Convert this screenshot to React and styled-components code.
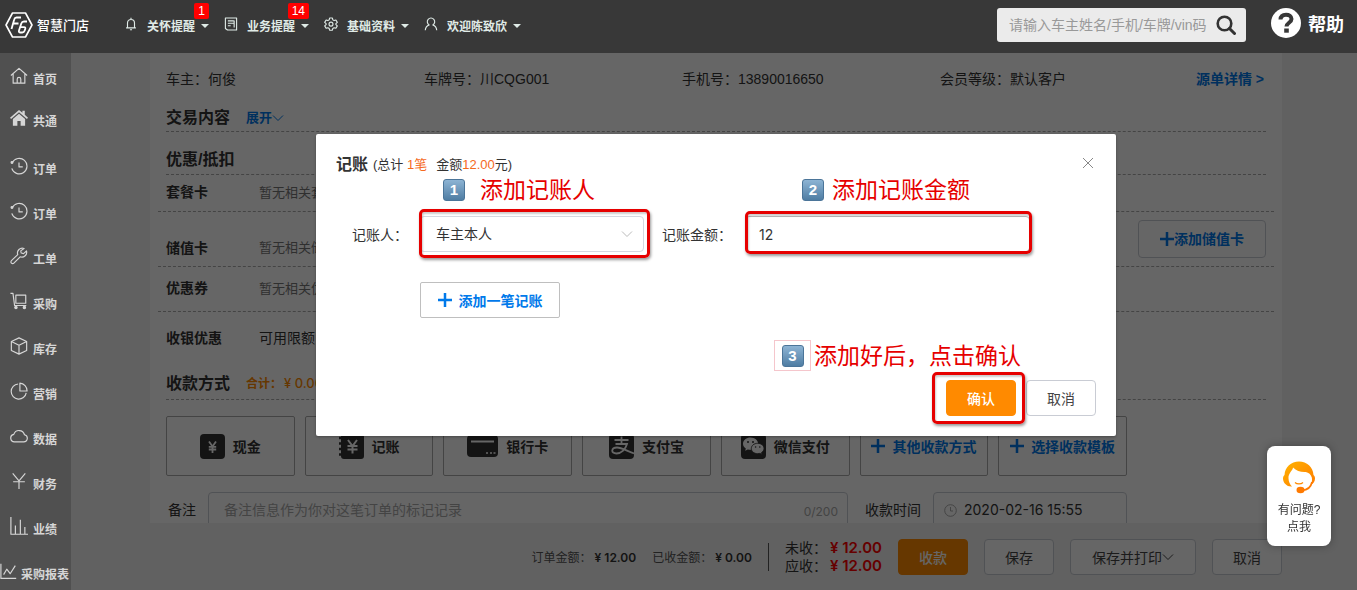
import React, { useState } from 'react';
import styled, { createGlobalStyle, css } from 'styled-components';

const colors = {
    header: '#383838',
    sidebar: '#505050',
    page: '#f2f2f2',
    blue: '#0079ea',
    orange: '#ff8a00',
    text: '#333',
    mutedText: '#777',
    border: '#c9ccd4',
    danger: '#e60000'
};

const baseFont = '"Liberation Sans", "Noto Sans CJK SC", sans-serif';
const numberFont = 'Inter, "Noto Sans CJK SC", sans-serif';

const menu = [
    { label: '首页', icon: 'home' },
    { label: '共通', icon: 'homeFill' },
    { label: '订单', icon: 'history', spaced: true },
    { label: '订单', icon: 'history' },
    { label: '工单', icon: 'wrench' },
    { label: '采购', icon: 'cart' },
    { label: '库存', icon: 'box' },
    { label: '营销', icon: 'pie' },
    { label: '数据', icon: 'cloud' },
    { label: '财务', icon: 'yen' },
    { label: '业绩', icon: 'bars' },
    { label: '采购报表', icon: 'line', wide: true }
];

const nav = [
    { label: '关怀提醒', icon: 'bell', badge: 1 },
    { label: '业务提醒', icon: 'doc', badge: 14 },
    { label: '基础资料', icon: 'gear' },
    { label: '欢迎陈致欣', icon: 'user' }
];

const glyphs = {
    home: <path d="M1 9.5 10 1.5l9 8M3.5 7.8V18h13V7.8M8 18v-4.5a2 2 0 0 1 4 0V18" />,
    homeFill: (
        <g fill="currentColor" stroke="none">
            <path d="M10 1 0 9.6l1.2 1.4L10 3.6l8.8 7.4L20 9.6l-3.6-3.1V2h-2.6v2.3z" />
            <path d="M10 5.4 3.2 11v7.6h5v-5.2h3.6v5.2h5V11z" />
        </g>
    ),
    history: (
        <g>
            <path d="M2.6 6.2A8.6 8.6 0 1 1 2 12.6M10 6v5h4.2" />
            <circle cx="2.2" cy="6.2" r="1" fill="currentColor" />
        </g>
    ),
    wrench: <path d="M15.6 1.6a5.4 5.4 0 0 0-7 6.8L1.6 15.2a1.9 1.9 0 0 0 0 2.7 1.9 1.9 0 0 0 2.7 0l7-7a5.4 5.4 0 0 0 7-6.6l-3.2 3-2.6-.6-.6-2.4z" />,
    cart: (
        <g>
            <path d="M.5 1.5h2.8l1.8 13.5h13M6.5 3.5h11v9h-11z" />
            <circle cx="6.6" cy="17.2" r="1.3" fill="currentColor" />
            <circle cx="16" cy="17.2" r="1.3" fill="currentColor" />
        </g>
    ),
    box: <path d="m10 1 8.5 4v10L10 19l-8.5-4V5zM1.5 5l8.5 4.2L18.5 5M10 9.2V19" />,
    pie: <path d="M9 2.2A8.4 8.4 0 1 0 18 12M11 1.3V10h8a8.6 8.6 0 0 0-8-8.7z" />,
    cloud: <path d="M5.4 16.5h9.8a4 4 0 0 0 .9-7.9 6.2 6.2 0 0 0-11.9-.4 4.2 4.2 0 0 0 1.2 8.3z" />,
    yen: <path d="m3 1.5 7 8.3 7-8.3M10 9.8V19M3.5 10.8h13" />,
    bars: <path d="M1 0v19.2h19M6 19V9.5M11.5 19V3M16.5 19v-8" />,
    line: <path d="M1 2v16.2h17M4 14l3.5-6 3.8 5L17 4" />,
    bell: <path d="M3 15.5h14M5 15.2V8.5a5 5 0 0 1 10 0v6.7M8.5 18.3h3M10 1.2v2" />,
    doc: <path d="M2 1.5h16v17H5l-3-2zM5.5 5.5H14M5.5 9H14M5.5 12.5h4M14.5 5v10" />,
    gear: (
        <g>
            <path d="m8 1.5-.6 2.6-1.8 1L3 4.3l-2 3.4 2 1.8v1.4l-2 1.8 2 3.4 2.6-.8 1.8 1 .6 2.6h4l.6-2.6 1.8-1 2.6.8 2-3.4-2-1.8V9.5l2-1.8-2-3.4-2.6.8-1.8-1-.6-2.6z" />
            <circle cx="10" cy="10.2" r="2.8" />
        </g>
    ),
    user: <path d="M1.8 19c.3-4.2 2.5-6.7 5.6-7.7a5.3 5.3 0 1 1 5.2 0c3.1 1 5.3 3.500 5.6 7.7" />
};

const Glyph = ({ name, size = 18, weight = 1.4 }) => (
    <svg
        width={size}
        height={size}
        viewBox="0 0 20 20"
        fill="none"
        stroke="currentColor"
        strokeWidth={weight}
        strokeLinejoin="round"
        aria-hidden="true"
    >
        {glyphs[name]}
    </svg>
);

const Plus = () => (
    <svg width="14" height="14" viewBox="0 0 14 14" stroke="currentColor" strokeWidth="2.5" aria-hidden="true">
        <path d="M7 0v14M0 7h14" />
    </svg>
);

const Chevron = () => (
    <svg width="12" height="12" viewBox="0 0 12 12" fill="none" stroke="currentColor" aria-hidden="true">
        <path d="m1 3.5 5 5 5-5" />
    </svg>
);

const Logo = () => (
    <svg width="28" height="26" viewBox="0 0 28 26" fill="none" stroke="#fff" aria-hidden="true">
        <path d="M7.5 1h13L27 13l-6.5 12h-13L1 13z" strokeWidth="1.6" strokeLinejoin="round" />
        <path d="M16 5.5h-4.5c-1.5 0-2 .8-2.3 2L6.5 17M8.5 11.5h5" strokeWidth="1.8" />
        <path d="M22 9.5h-3c-1.5 0-2.3.7-2.7 2l-2.3 7c-.4 1.4.1 2 1.3 2h2c1.2 0 1.9-.5 2.3-1.7l.6-1.9c.4-1.2 0-1.8-1.2-1.8h-3.5" strokeWidth="1.8" />
    </svg>
);

const CashIcon = () => (
    <svg width="25" height="25" viewBox="0 0 25 25" aria-hidden="true">
        <rect width="25" height="25" rx="4" fill="#333" />
        <path d="m9 7.5 3.5 5 3.5-5M12.5 12.5V19M8.8 12.8h7.4M8.8 15.5h7.4" fill="none" stroke="#fff" strokeWidth="1.8" />
    </svg>
);

const LedgerIcon = () => (
    <svg width="25" height="25" viewBox="0 0 25 25" aria-hidden="true">
        <rect x="2" width="23" height="25" rx="3" fill="#333" />
        <path d="M0 4h4M0 9.5h4M0 15h4M0 20.5h4" stroke="#333" strokeWidth="2.5" />
        <path d="m9 6 4.5 6L18 6M13.5 12v7.5M8.5 12h10M8.5 15.5h10" fill="none" stroke="#fff" strokeWidth="2" />
    </svg>
);

const BankIcon = () => (
    <svg width="31" height="22" viewBox="0 0 31 22" aria-hidden="true">
        <rect width="31" height="22" rx="4" fill="#333" />
        <path d="M4 6.5h23" stroke="#fff" strokeWidth="2" />
        <path d="M19 18h2M23 18h2M26.5 18h2" stroke="#fff" strokeWidth="1.5" />
    </svg>
);

const AlipayIcon = () => (
    <svg width="25" height="25" viewBox="0 0 25 25" aria-hidden="true">
        <rect width="25" height="25" rx="4" fill="#333" />
        <path
            d="M5.5 6h14M12.5 2.5V10M6.5 10H18c-1.5 5.5-6 9.5-10.5 9.5-6 0-5.5-6 .5-6 5 0 9.5 3.5 17 6"
            fill="none"
            stroke="#fff"
            strokeWidth="1.8"
        />
    </svg>
);

const WechatIcon = () => (
    <svg width="25" height="25" viewBox="0 0 25 25" aria-hidden="true">
        <rect width="25" height="25" rx="4" fill="#333" />
        <path d="M9.5 3.5C5.4 3.5 2 6.2 2 9.7c0 2 1.1 3.7 2.8 4.8l-.6 2.2 2.6-1.3c.9.3 1.8.4 2.7.4 4.2 0 7.6-2.7 7.6-6.1s-3.4-6.2-7.6-6.2z" fill="#fff" />
        <path d="M16.7 9.3c-3.6 0-6.4 2.3-6.4 5.2s2.8 5.2 6.4 5.2c.8 0 1.5-.1 2.2-.3l2.2 1.1-.6-1.9c1.5-1 2.5-2.4 2.5-4.1 0-2.9-2.8-5.2-6.3-5.2z" fill="#fff" stroke="#333" strokeWidth=".9" />
        <g fill="#333">
            <circle cx="7" cy="8" r="1" />
            <circle cx="12" cy="8" r="1" />
            <circle cx="14.6" cy="13" r=".8" />
            <circle cx="18.8" cy="13" r=".8" />
        </g>
    </svg>
);

const AgentIcon = () => (
    <svg width="34" height="34" viewBox="0 0 34 34" aria-hidden="true">
        <defs>
            <linearGradient id="agent" x1="0" y1="0" x2="1" y2="1">
                <stop offset="0" stopColor="#ffb400" />
                <stop offset="1" stopColor="#ff7a00" />
            </linearGradient>
        </defs>
        <path
            d="M10 26.5C5 27 1 23 1 18.5c0-1.5.5-2.5 1.5-3.5C3 7 9 1.5 17 1.5S31 7 31.5 15c1 1 1.5 2 1.5 3.5 0 3-1.5 5-4 6.3 1-2.3 1.3-5 .8-7.3-1-3-3-5-6-5.5-5 .3-9.3-1-12.8-4.5C11 10.5 6 13 6.5 18.5c.2 3.5 1.5 6 3.5 8z"
            fill="url(#agent)"
        />
        <path d="M13 22.5c2 1.8 6 1.8 8 0" fill="none" stroke="#ff8a00" strokeWidth="1.3" />
        <path d="M30 22c-1 5-4.5 8-10 8.5" fill="none" stroke="#ff7a00" strokeWidth="1.7" />
        <ellipse cx="18.5" cy="30" rx="4" ry="3.3" fill="#ff7a00" />
    </svg>
);

const payMethods = [
    { label: '现金', icon: <CashIcon /> },
    { label: '记账', icon: <LedgerIcon /> },
    { label: '银行卡', icon: <BankIcon /> },
    { label: '支付宝', icon: <AlipayIcon /> },
    { label: '微信支付', icon: <WechatIcon /> },
    { label: '其他收款方式', icon: <Plus />, link: true },
    { label: '选择收款模板', icon: <Plus />, link: true }
];

const Header = () => (
    <HeaderBar>
        <Brand href="#">
            <Logo />
            <span>智慧门店</span>
        </Brand>
        <Nav>
            {nav.map(({ label, icon, badge }) => (
                <NavButton key={label} type="button">
                    <Glyph name={icon} size={14} weight={1.6} />
                    <span>{label}</span>
                    <Caret />
                    {badge && <Badge>{badge}</Badge>}
                </NavButton>
            ))}
        </Nav>
        <Search role="search">
            <input aria-label="搜索" placeholder="请输入车主姓名/手机/车牌/vin码" />
            <button type="button" aria-label="搜索">
                <svg width="20" height="20" viewBox="0 0 20 20" fill="none" stroke="#333">
                    <circle cx="8.5" cy="8.5" r="6.8" strokeWidth="2.6" />
                    <path d="m13.5 13.5 5 5" strokeWidth="3" strokeLinecap="round" />
                </svg>
            </button>
        </Search>
        <Help href="#">
            <svg width="30" height="30" viewBox="0 0 30 30" aria-hidden="true">
                <circle cx="15" cy="15" r="15" fill="#fff" />
                <path d="M9.5 11.5c.2-3.5 2.4-4.8 5.5-4.8s5.5 1.5 5.5 4.3c0 3.8-5 3.7-5 7.5" fill="none" stroke={colors.header} strokeWidth="4" />
                <rect x="13.2" y="20.5" width="4.6" height="4.2" fill={colors.header} />
            </svg>
            <span>帮助</span>
        </Help>
    </HeaderBar>
);

const Sidebar = () => (
    <Side>
        {menu.map(({ label, icon, spaced, wide }, i) => (
            <SideLink key={i} href="#" $short={i < 2} $spaced={spaced} $wide={wide}>
                <Glyph name={icon} weight={1.3} />
                <span>{label}</span>
            </SideLink>
        ))}
    </Side>
);

const Order = () => {
    const [remark, setRemark] = useState('');

    return (
        <Panel>
            <InfoRow>
                <p>车主：何俊</p>
                <p>车牌号：川CQG001</p>
                <p>手机号：13890016650</p>
                <p>会员等级：默认客户</p>
                <a href="#">源单详情 &gt;</a>
            </InfoRow>
            <Section $height={27} $line={26}>
                <h2>交易内容</h2>
                <Expand type="button">展开<Chevron /></Expand>
            </Section>
            <Section $height={43} $line={28}>
                <h2>优惠/抵扣</h2>
            </Section>
            <Discount $height={37}>
                <h3>套餐卡</h3>
                <p>暂无相关套餐卡</p>
            </Discount>
            <Discount $height={55}>
                <h3>储值卡</h3>
                <p>暂无相关储值卡</p>
                <AddCard type="button"><Plus />添加储值卡</AddCard>
            </Discount>
            <Discount $height={45}>
                <h3>优惠券</h3>
                <p>暂无相关优惠券</p>
            </Discount>
            <Discount $height={52} $plain>
                <h3>收银优惠</h3>
                <p>可用限额</p>
            </Discount>
            <Section $height={36} $line={30}>
                <h2>收款方式</h2>
                <Total>合计：<b>¥ 0.00</b></Total>
            </Section>
            <PayGrid>
                {payMethods.map(({ label, icon, link }) => (
                    <PayButton key={label} type="button" $link={link}>
                        {icon}
                        <span>{label}</span>
                    </PayButton>
                ))}
            </PayGrid>
            <RemarkRow>
                <label htmlFor="remark">备注</label>
                <RemarkBox>
                    <textarea
                        id="remark"
                        maxLength={200}
                        placeholder="备注信息作为你对这笔订单的标记记录"
                        value={remark}
                        onChange={e => setRemark(e.target.value)}
                    />
                    <span>{remark.length}/200</span>
                </RemarkBox>
                <label htmlFor="time">收款时间</label>
                <TimeBox>
                    <svg width="13" height="13" viewBox="0 0 13 13" fill="none" stroke="#aaa" aria-hidden="true">
                        <circle cx="6.5" cy="6.5" r="5.8" />
                        <path d="M6.5 3v4H9" />
                    </svg>
                    <input id="time" defaultValue="2020-02-16 15:55" />
                </TimeBox>
            </RemarkRow>
        </Panel>
    );
};

const Footer = () => (
    <FooterBar>
        <Sum>订单金额：<b>¥ 12.00</b></Sum>
        <Sum>已收金额：<b>¥ 0.00</b></Sum>
        <Due>
            <p>未收：<b>¥ 12.00</b></p>
            <p>应收：<b>¥ 12.00</b></p>
        </Due>
        <FooterActions>
            <Button type="button" $primary>收款</Button>
            <Button type="button">保存</Button>
            <Button type="button" $wide>保存并打印<Chevron /></Button>
            <Button type="button">取消</Button>
        </FooterActions>
    </FooterBar>
);

const CreditDialog = () => {
    const [amount, setAmount] = useState('12');

    return (
        <Dialog role="dialog" aria-labelledby="credit-title">
            <DialogHead>
                <h1 id="credit-title">记账</h1>
                <p>(总计 <em>1笔</em></p>
                <p>金额<em>12.00</em>元)</p>
                <button type="button" aria-label="关闭">
                    <svg width="12" height="12" viewBox="0 0 12 12" stroke="#888">
                        <path d="m1 1 10 10M11 1 1 11" />
                    </svg>
                </button>
            </DialogHead>
            <FormRow>
                <label htmlFor="payer">记账人：</label>
                <SelectBox>
                    <select id="payer" defaultValue="owner">
                        <option value="owner">车主本人</option>
                    </select>
                    <Chevron />
                    <Outline $inset="-7px -6px -6px -1px" />
                    <Note $left={23} $top={-40} $gap={15}><Key>1</Key>添加记账人</Note>
                </SelectBox>
                <label htmlFor="amount">记账金额：</label>
                <AmountBox>
                    <input id="amount" value={amount} onChange={e => setAmount(e.target.value)} />
                    <Outline $inset="-5px -2px -2px 0" />
                    <Note $left={57} $top={-40} $gap={8}><Key>2</Key>添加记账金额</Note>
                </AmountBox>
            </FormRow>
            <AddEntry type="button"><Plus />添加一笔记账</AddEntry>
            <DialogActions>
                <Confirm>
                    <Button type="button" $primary>确认</Button>
                    <Outline $inset="-8px -9px -8px -14px" />
                    <Note $left={-172} $top={-40} $gap={3}>
                        <KeyFrame><Key>3</Key></KeyFrame>添加好后，点击确认
                    </Note>
                </Confirm>
                <Button type="button">取消</Button>
            </DialogActions>
        </Dialog>
    );
};

const App = () => (
    <>
        <GlobalStyle />
        <Page>
            <Header />
            <Body>
                <Sidebar />
                <Main>
                    <Order />
                    <Footer />
                    <Mask>
                        <CreditDialog />
                    </Mask>
                </Main>
            </Body>
            <Support href="#">
                <AgentIcon />
                <span>有问题?<br />点我</span>
            </Support>
        </Page>
    </>
);

export default App;

const GlobalStyle = createGlobalStyle`
    * {
        box-sizing: border-box;
        margin: 0;
    }

    body {
        font-family: ${baseFont};
        font-size: 14px;
        color: ${colors.text};
        overflow: hidden;
    }

    button, input, select, textarea {
        font: inherit;
        color: inherit;
        padding: 0;
        border: 0;
        outline: 0;
        background: none;
    }

    button {
        cursor: pointer;
    }

    a {
        color: inherit;
        text-decoration: none;
    }

    svg {
        flex: none;
    }
`;

const Page = styled.div`
    height: 100vh;
    display: flex;
    flex-direction: column;
`;

const HeaderBar = styled.header`
    flex: none;
    height: 53px;
    padding: 0 13px 0 5px;
    display: flex;
    align-items: center;
    background-color: ${colors.header};
    color: #fff;
`;

const Brand = styled.a`
    width: 119px;
    padding-bottom: 4px;
    display: flex;
    align-items: center;
    gap: 4px;
    font-size: 13px;
    font-weight: 500;
`;

const Nav = styled.nav`
    flex: 1;
    display: flex;
    gap: 15px;
`;

const NavButton = styled.button`
    position: relative;
    height: 53px;
    padding-bottom: 2px;
    display: flex;
    align-items: center;
    font-size: 12px;
    font-weight: 700;
    color: #e0ebe7;

    & > span {
        margin: 0 6px 0 9px;
    }

    & > svg {
        margin-bottom: 3px;
    }
`;

const Caret = styled.i`
    border: 4px solid transparent;
    border-top-color: currentColor;
    border-bottom: 0;
`;

const Badge = styled.sup`
    position: absolute;
    top: 3px;
    right: 0;
    padding: 0 4px;
    border-radius: 2px;
    background-color: #f00;
    color: #fff;
    font-size: 12px;
    font-weight: 400;
    line-height: 16px;
`;

const Search = styled.div`
    width: 249px;
    height: 34px;
    margin-bottom: 3px;
    padding: 0 10px 0 12px;
    display: flex;
    align-items: center;
    gap: 6px;
    border-radius: 3px;
    background-color: #ebebeb;

    input {
        flex: 1;
        min-width: 0;
        color: #333;
    }

    input::placeholder {
        color: #999;
    }

    button {
        display: flex;
    }
`;

const Help = styled.a`
    margin: 0 0 7px 25px;
    display: flex;
    align-items: center;
    gap: 7px;
    font-size: 18px;
    font-weight: 700;
`;

const Body = styled.div`
    flex: 1;
    min-height: 0;
    display: flex;
`;

const Side = styled.aside`
    flex: none;
    width: 71px;
    padding-top: 4px;
    overflow: hidden;
    background-color: ${colors.sidebar};
    color: #d6d6d6;
`;

const SideLink = styled.a`
    height: ${p => p.$short ? 42 : 45}px;
    margin-top: ${p => p.$spaced ? 5 : 0}px;
    padding-left: ${p => p.$wide ? 0 : 10}px;
    display: flex;
    align-items: center;
    gap: ${p => p.$wide ? 3 : 5}px;
    font-size: 12px;
    font-weight: 700;
    white-space: nowrap;

    & > svg {
        margin-bottom: 5px;
    }
`;

const Main = styled.main`
    position: relative;
    flex: 1;
    min-width: 0;
    display: flex;
    flex-direction: column;
    padding: 0 75px 0 79px;
    background-color: ${colors.page};
`;

const Mask = styled.div`
    position: absolute;
    inset: 0;
    padding: 81px 75px 0 79px;
    background-color: rgba(0, 0, 0, .6);
`;

const Panel = styled.section`
    flex: 1;
    min-height: 0;
    overflow: hidden;
    padding: 0 16px;
    background-color: #fff;
`;

const InfoRow = styled.div`
    height: 52px;
    padding: 0 2px 2px 0;
    display: flex;
    align-items: center;
    white-space: nowrap;

    & > p {
        flex: none;
        width: 258px;
    }

    & > p:last-of-type {
        flex: 1;
    }

    & > a {
        color: ${colors.blue};
        font-weight: 700;
    }
`;

const Section = styled.div`
    height: ${p => p.$height}px;
    display: flex;
    align-items: flex-end;
    gap: 16px;
    border-bottom: 1px dashed #aaa;
    line-height: ${p => p.$line}px;

    h2 {
        font-size: 16px;
        font-weight: 700;
    }
`;

const Expand = styled.button`
    display: flex;
    align-items: center;
    color: ${colors.blue};
    font-size: 13px;
    font-weight: 700;
    line-height: inherit;
`;

const Total = styled.span`
    color: ${colors.orange};
    font-size: 12px;
    font-weight: 700;

    b {
        margin-left: 2px;
        font-family: ${numberFont};
        font-size: 13px;
        font-weight: 500;
    }
`;

const Discount = styled.div`
    height: ${p => p.$height}px;
    margin: 0 -8px;
    padding: 0 8px;
    display: flex;
    align-items: flex-end;
    border-bottom: ${p => p.$plain ? 0 : '1px dashed #aaa'};
    line-height: ${p => p.$height === 55 ? 36 : p.$height}px;

    h3 {
        width: 93px;
        font-size: 14px;
        font-weight: 700;
    }

    p {
        flex: 1;
        font-size: ${p => p.$plain ? 14 : 13}px;
        color: ${p => p.$plain ? colors.text : colors.mutedText};
    }
`;

const AddCard = styled.button`
    align-self: center;
    width: 128px;
    height: 38px;
    display: flex;
    align-items: center;
    justify-content: center;
    border: 1px solid ${colors.border};
    border-radius: 4px;
    color: ${colors.blue};
    font-weight: 700;
`;

const PayGrid = styled.div`
    margin: 16px 139px 16px 0;
    display: grid;
    grid-template-columns: repeat(7, 1fr);
    gap: 10px;
`;

const PayButton = styled.button`
    height: 60px;
    display: flex;
    align-items: center;
    justify-content: center;
    gap: ${p => p.$link ? 7 : 8}px;
    border: 1px solid #aaa;
    border-radius: 2px;
    font-weight: 700;
    white-space: nowrap;
    color: ${p => p.$link ? colors.blue : colors.text};
`;

const fieldBox = css`
    height: 80px;
    border: 1px solid ${colors.border};
    border-radius: 4px;
    display: flex;
    align-items: flex-start;
    line-height: 34px;
`;

const RemarkRow = styled.div`
    margin-right: 139px;
    padding-left: 2px;
    display: flex;
    line-height: 36px;
`;

const RemarkBox = styled.div`
    ${fieldBox}
    flex: 1;
    margin: 0 17px 0 12px;
    padding: 0 9px 0 15px;

    textarea {
        flex: 1;
        height: 70px;
        resize: none;
        line-height: 34px;
    }

    textarea::placeholder {
        color: #aaa;
    }

    span {
        font-family: ${numberFont};
        font-size: 12px;
        line-height: 38px;
        color: #aaa;
    }
`;

const TimeBox = styled.div`
    ${fieldBox}
    width: 194px;
    margin-left: 12px;
    padding: 0 11px 0 10px;
    gap: 7px;

    svg {
        margin-top: 11px;
    }

    input {
        flex: 1;
        min-width: 0;
        font-family: ${numberFont};
        font-size: 14px;
    }
`;

const FooterBar = styled.footer`
    flex: none;
    height: 67px;
    display: flex;
    align-items: center;
    justify-content: flex-end;
`;

const Sum = styled.p`
    margin-right: 16px;
    font-size: 12px;
    color: #555;

    b {
        margin-left: 3px;
        font-family: ${numberFont};
        font-weight: 600;
        color: ${colors.text};
    }
`;

const Due = styled.div`
    margin-right: 16px;
    padding-left: 17px;
    position: relative;
    line-height: 18px;

    &::before {
        content: '';
        position: absolute;
        left: 0;
        top: 4px;
        bottom: 4px;
        border-left: 1px solid #555;
    }

    b {
        margin-left: 3px;
        font-size: 15px;
        font-family: ${numberFont};
        font-weight: 600;
        color: #f00;
    }
`;

const FooterActions = styled.div`
    display: flex;
    gap: 16px;
`;

const Button = styled.button`
    width: ${p => p.$wide ? 126 : 70}px;
    height: 36px;
    display: flex;
    align-items: center;
    justify-content: center;
    border: 1px solid ${p => p.$primary ? colors.orange : colors.border};
    border-radius: 4px;
    background-color: ${p => p.$primary ? colors.orange : '#fff'};
    color: ${p => p.$primary ? '#fff' : '#444'};
    font-weight: ${p => p.$primary ? 500 : 400};
`;

const Dialog = styled.section`
    position: relative;
    max-width: 800px;
    margin: 0 auto;
    padding: 20px;
    border-radius: 2px;
    background-color: #fff;
    box-shadow: 0 1px 3px rgba(0, 0, 0, .3);
`;

const DialogHead = styled.header`
    height: 22px;
    display: flex;
    align-items: center;
    line-height: 22px;

    h1 {
        margin-right: 5px;
        font-size: 16px;
        font-weight: 700;
    }

    p {
        margin-right: 9px;
        font-size: 13px;
    }

    em {
        font-style: normal;
        color: #f56a1d;
    }

    button {
        margin: 0 2px 4px auto;
        display: flex;
    }
`;

const FormRow = styled.div`
    height: 36px;
    margin-top: 40px;
    padding-left: 16px;
    display: flex;
    align-items: center;

    & > label {
        width: 68px;
        white-space: nowrap;
    }
`;

const SelectBox = styled.div`
    position: relative;
    width: 224px;
    margin-right: 18px;

    select {
        display: block;
        width: 100%;
        height: 36px;
        padding: 0 30px 0 15px;
        border: 1px solid #d5d8e0;
        border-radius: 4px;
        appearance: none;
    }

    & > svg {
        position: absolute;
        right: 11px;
        top: 12px;
        color: #bbb;
        pointer-events: none;
    }
`;

const AmountBox = styled.div`
    position: relative;
    width: 285px;
    margin-left: 15px;

    input {
        display: block;
        width: 100%;
        height: 36px;
        padding: 0 13px;
        border: 1px solid #bbb;
        border-radius: 4px;
        font-family: ${numberFont};
        font-size: 14px;
    }
`;

const Outline = styled.div`
    position: absolute;
    inset: ${p => p.$inset};
    border: 3px solid ${colors.danger};
    border-radius: 5px;
    box-shadow: 1px 2px 3px rgba(0, 0, 0, .4), inset 1px 2px 2px rgba(0, 0, 0, .2);
    pointer-events: none;
`;

const Note = styled.div`
    position: absolute;
    left: ${p => p.$left}px;
    top: ${p => p.$top}px;
    display: flex;
    align-items: center;
    gap: ${p => p.$gap}px;
    color: ${colors.danger};
    font-size: 23px;
    line-height: 28px;
    white-space: nowrap;
`;

const Key = styled.span`
    width: 22px;
    height: 22px;
    border: 1px solid #4b7599;
    border-radius: 3px;
    background-image: linear-gradient(#8db4d4, #4f7da3);
    color: #fff;
    font-size: 15px;
    font-weight: 700;
    line-height: 20px;
    text-align: center;
`;

const KeyFrame = styled.span`
    width: 37px;
    height: 31px;
    display: flex;
    align-items: center;
    justify-content: center;
    border: 1px solid #f5c6cc;
`;

const AddEntry = styled.button`
    width: 140px;
    height: 36px;
    margin: 30px 0 0 84px;
    display: flex;
    align-items: center;
    justify-content: center;
    gap: 7px;
    border: 1px solid #bfbfbf;
    border-radius: 2px;
    color: ${colors.blue};
    font-weight: 700;
`;

const DialogActions = styled.footer`
    margin-top: 62px;
    display: flex;
    justify-content: flex-end;
    gap: 10px;
`;

const Confirm = styled.div`
    position: relative;
`;

const Support = styled.a`
    position: fixed;
    right: 26px;
    bottom: 44px;
    width: 64px;
    height: 100px;
    padding-top: 14px;
    display: flex;
    flex-direction: column;
    align-items: center;
    gap: 8px;
    border-radius: 8px;
    background-color: #fff;
    box-shadow: 0 0 8px rgba(0, 0, 0, .3);
    font-size: 12px;
    line-height: 17px;
    text-align: center;
`;
